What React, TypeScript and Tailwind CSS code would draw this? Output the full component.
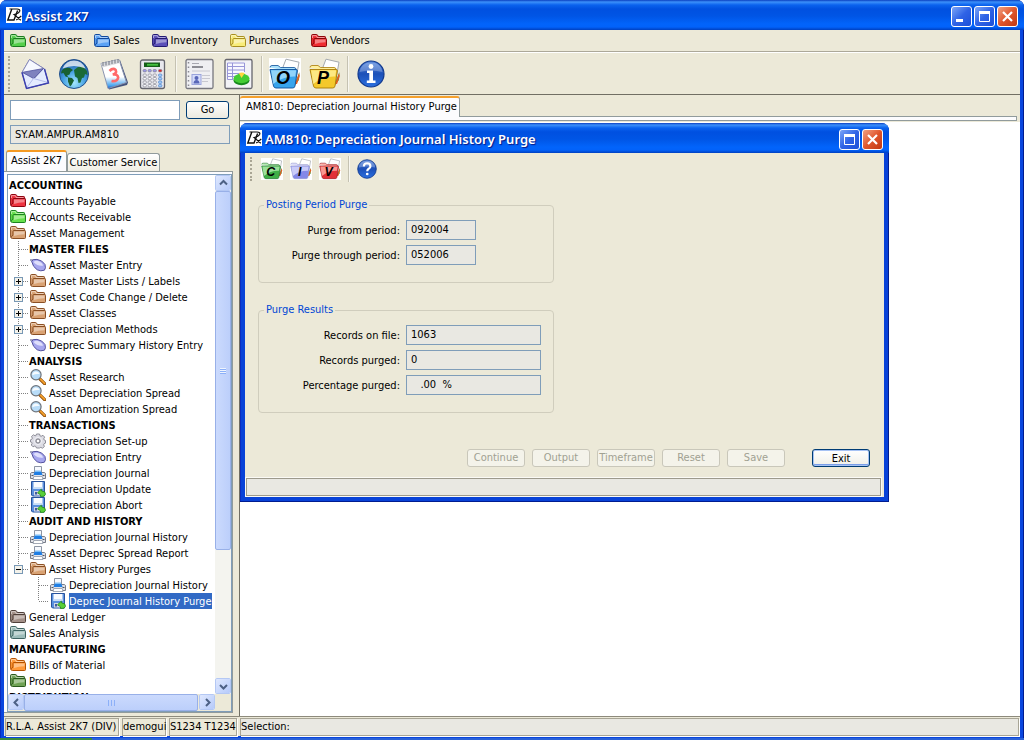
import React from "react";

type IconKind = "folder" | "pill" | "lens" | "gear" | "printer" | "disk";

interface TreeItem {
  label: string;
  depth: 0 | 1 | 2;
  icon?: IconKind;
  color?: string;
  dark?: string;
  toggle?: "plus" | "minus";
  last?: boolean;
  selected?: boolean;
}

const TAN = "#d9a273";
const TAN_DARK = "#8a4f24";

const TREE: TreeItem[] = [
  { label: "ACCOUNTING", depth: 0 },
  { label: "Accounts Payable", depth: 0, icon: "folder", color: "#ee3340", dark: "#8c0510" },
  { label: "Accounts Receivable", depth: 0, icon: "folder", color: "#66e04c", dark: "#1c8420" },
  { label: "Asset Management", depth: 0, icon: "folder", color: TAN, dark: TAN_DARK },
  { label: "MASTER FILES", depth: 1 },
  { label: "Asset Master Entry", depth: 1, icon: "pill" },
  { label: "Asset Master Lists / Labels", depth: 1, icon: "folder", color: TAN, dark: TAN_DARK, toggle: "plus" },
  { label: "Asset Code Change / Delete", depth: 1, icon: "folder", color: TAN, dark: TAN_DARK, toggle: "plus" },
  { label: "Asset Classes", depth: 1, icon: "folder", color: TAN, dark: TAN_DARK, toggle: "plus" },
  { label: "Depreciation Methods", depth: 1, icon: "folder", color: TAN, dark: TAN_DARK, toggle: "plus" },
  { label: "Deprec Summary History Entry", depth: 1, icon: "pill" },
  { label: "ANALYSIS", depth: 1 },
  { label: "Asset Research", depth: 1, icon: "lens" },
  { label: "Asset Depreciation Spread", depth: 1, icon: "lens" },
  { label: "Loan Amortization Spread", depth: 1, icon: "lens" },
  { label: "TRANSACTIONS", depth: 1 },
  { label: "Depreciation Set-up", depth: 1, icon: "gear" },
  { label: "Depreciation Entry", depth: 1, icon: "pill" },
  { label: "Depreciation Journal", depth: 1, icon: "printer" },
  { label: "Depreciation Update", depth: 1, icon: "disk" },
  { label: "Depreciation Abort", depth: 1, icon: "disk" },
  { label: "AUDIT AND HISTORY", depth: 1 },
  { label: "Depreciation Journal History", depth: 1, icon: "printer" },
  { label: "Asset Deprec Spread Report", depth: 1, icon: "printer" },
  { label: "Asset History Purges", depth: 1, icon: "folder", color: TAN, dark: TAN_DARK, toggle: "minus", last: true },
  { label: "Depreciation Journal History", depth: 2, icon: "printer" },
  { label: "Deprec Journal History Purge", depth: 2, icon: "disk", last: true, selected: true },
  { label: "General Ledger", depth: 0, icon: "folder", color: "#a39088", dark: "#4f403a" },
  { label: "Sales Analysis", depth: 0, icon: "folder", color: "#9dbdba", dark: "#3f6462" },
  { label: "MANUFACTURING", depth: 0 },
  { label: "Bills of Material", depth: 0, icon: "folder", color: "#ff9a3a", dark: "#b55200" },
  { label: "Production", depth: 0, icon: "folder", color: "#6fa254", dark: "#2a5a1c" },
  { label: "DISTRIBUTION", depth: 0 },
];

const MENUS = [
  { label: "Customers", color: "#55cf4b", dark: "#1b7a1f" },
  { label: "Sales", color: "#5ba2f5", dark: "#11489c" },
  { label: "Inventory", color: "#5b50b8", dark: "#231a72" },
  { label: "Purchases", color: "#f8ec78", dark: "#a88e20" },
  { label: "Vendors", color: "#ee2c30", dark: "#8a0508" },
];

function Folder({ color = TAN, dark = TAN_DARK }: { color?: string; dark?: string }) {
  return (
    <svg width="16" height="16" viewBox="0 0 16 16" className="shrink-0" aria-hidden="true">
      <path d="M.6 11.500V2.500q0-1 1-1h3.900q.8 0 1.200.9l.5 1.100h6.600q.7 0 .7.800v2" fill={color} stroke={dark} />
      <path d="M1.500 5V2.600h3.800l.9 1.900h7.300" fill="none" stroke="#fff" strokeOpacity=".5" />
      <path d="M4 5.500h10.700q.9 0 .8.900v6.200q0 .9-.9.900H2.600Q.6 13.500.6 11.500q1.900.2 2.300-1.500V6.500q0-1 1.100-1z" fill={color} stroke={dark} />
      <path d="M4 6.500h10.500v2.700Q8.500 9.500 4 11z" fill="#fff" fillOpacity=".4" />
    </svg>
  );
}

function Pill() {
  return (
    <svg width="16" height="16" viewBox="0 0 16 16" className="shrink-0" aria-hidden="true">
      <path d="M0 3h4" stroke="#8888a8" strokeWidth="1.500" />
      <path d="M1.600 4.200Q2.600 2 7 2.400Q12.500 3.200 15 7.500Q16.200 11.200 14.400 13.200Q10.800 14.600 7.200 12.800Q2.800 10 1.600 4.200z" fill="#a6a6ee" stroke="#5654a0" />
      <path d="M3.400 5Q6 3 9.500 4.400Q12.300 6 13.200 8.600Q8.300 9.800 3.400 5z" fill="#f0f0ff" fillOpacity=".75" />
    </svg>
  );
}

function Lens() {
  return (
    <svg width="16" height="16" viewBox="0 0 16 16" className="shrink-0" aria-hidden="true">
      <path d="M9.800 9.800l4.800 4.800" stroke="#8a4a06" strokeWidth="3.200" strokeLinecap="round" />
      <path d="M10.400 10.200l4.200 4.200" stroke="#f5a02c" strokeWidth="1.800" strokeLinecap="round" />
      <circle cx="6" cy="5.700" r="5.100" fill="#b8dcf8" stroke="#6e747c" strokeWidth="1.200" />
      <path d="M2.300 6.200a3.800 3.800 0 0 1 7.400-1.200q-3.600-.5-7.400 1.200z" fill="#fff" fillOpacity=".85" />
    </svg>
  );
}

function Gear() {
  return (
    <svg width="16" height="16" viewBox="0 0 16 16" className="shrink-0" aria-hidden="true">
      <path
        d="M6.500 1h3l.6 1.900 1 .4 1.900-1 1.600 1.800-.9 1.800.4 1 1.400.6v2.600l-1.500.7-.4 1 .8 1.700-1.900 1.700-1.700-.8-1.100.5L9.500 15h-3l-.7-1.500-1-.5-1.800.8-1.700-1.800.8-1.700-.4-1L.5 9V6.800l1.400-.6.5-1-.9-1.700 2-1.700 1.600 1 1-.4z"
        fill="#dcdce4"
        stroke="#8e8e98"
        strokeLinejoin="round"
      />
      <circle cx="8" cy="8" r="3.700" fill="#cfcfd8" stroke="#f6f6fa" strokeWidth=".8" />
      <circle cx="8" cy="8" r="2" fill="#fff" stroke="#777780" />
    </svg>
  );
}

function Printer() {
  return (
    <svg width="16" height="16" viewBox="0 0 16 16" className="shrink-0" aria-hidden="true">
      <path d="M1.500 7.500h13q1 .5 1 1.500v4.500H.5V9q0-1 1-1.500z" fill="#dfe1e8" stroke="#777c88" />
      <path d="M4.500 8.500v-7h7v7" fill="#f6f9fe" stroke="#8d95a4" />
      <path d="M5 5.500h6v2H5z" fill="#7abcf6" />
      <path d="M4.500 7h7l1 3h-9z" fill="#1f7ee4" />
      <path d="M3 14.500l.8-3h8.400l.8 3z" fill="#fff" stroke="#8d95a4" strokeWidth=".8" />
      <path d="M1.500 10.500h2M12.500 10.500h2" stroke="#50545e" />
    </svg>
  );
}

function Disk() {
  return (
    <svg width="16" height="16" viewBox="0 0 16 16" className="shrink-0" aria-hidden="true">
      <path d="M1.500 .5h13v14.500h-12l-1-1z" fill="#5a90de" stroke="#27529c" />
      <path d="M3.500 1h9v7h-9z" fill="#f8fbff" />
      <path d="M3.500 6h9v2h-9z" fill="#c8def8" />
      <path d="M4 10h7.500v4.500H4z" fill="#d4d8e4" />
      <path d="M5 11h2v2.500H5z" fill="#3d5aa0" />
      <path d="M7.500 11.800l3.800-3.600.4 1.800q3.800 0 3.800 3.300-.5 2.700-5 2.200v-1.700z" fill="#58d038" stroke="#24851a" strokeWidth=".8" />
    </svg>
  );
}

function TreeIcon({ item }: { item: TreeItem }) {
  switch (item.icon) {
    case "folder":
      return <Folder color={item.color} dark={item.dark} />;
    case "pill":
      return <Pill />;
    case "lens":
      return <Lens />;
    case "gear":
      return <Gear />;
    case "printer":
      return <Printer />;
    default:
      return <Disk />;
  }
}

function Guide({ item }: { item: TreeItem }) {
  return (
    <svg width="20" height="16" viewBox="0 0 20 16" className="shrink-0" aria-hidden="true" shapeRendering="crispEdges">
      <path d={item.last ? "M9.500 0v8" : "M9.500 0v16"} stroke="#808080" strokeDasharray="1 1" fill="none" />
      <path d="M10 8.500h10" stroke="#808080" strokeDasharray="1 1" fill="none" />
      {item.toggle && (
        <g>
          <rect x="5.500" y="4.500" width="8" height="8" fill="#f4f2ea" stroke="#7898b5" />
          <path d={item.toggle === "plus" ? "M7 8.500h5M9.500 6v5" : "M7 8.500h5"} stroke="#000" fill="none" />
        </g>
      )}
    </svg>
  );
}

function TreeRow({ item }: { item: TreeItem }) {
  return (
    <li
      role="treeitem"
      aria-level={item.depth + 1}
      aria-selected={item.selected ? true : false}
      className="flex h-4 items-start whitespace-nowrap"
    >
      {item.depth === 2 && <span className="w-5 shrink-0" />}
      {item.depth > 0 && <Guide item={item} />}
      {item.icon && (
        <span className="flex w-5 shrink-0 pl-px">
          <TreeIcon item={item} />
        </span>
      )}
      <span
        className={
          item.selected
            ? "h-4 bg-[#316ac5] pr-px leading-[18px] text-white"
            : item.icon
              ? "leading-[18px]"
              : "leading-[18px] font-bold"
        }
      >
        {item.label}
      </span>
    </li>
  );
}

function Logo() {
  return (
    <svg width="16" height="16" viewBox="0 0 16 16" className="shrink-0" aria-hidden="true">
      <rect width="16" height="16" fill="#fff" />
      <path d="M5.800 2L1.800 13H8L11.600 3.500" fill="none" stroke="#111" strokeWidth="1.400" />
      <path d="M3.500 2h7.500q3.500.2 2.700 2.300Q12.500 6.800 8 7.500l6.800 5.800M15.300 9l-5 4" fill="none" stroke="#111" strokeWidth="1.200" />
    </svg>
  );
}

function CaptionButton({ kind }: { kind: "min" | "max" | "close" }) {
  return (
    <button
      type="button"
      aria-label={kind === "min" ? "Minimize" : kind === "max" ? "Maximize" : "Close"}
      className={
        kind === "close"
          ? "flex size-[21px] items-center justify-center rounded-[3px] border border-white bg-linear-to-br from-[#f0a080] via-[#e0562c] to-[#c03810]"
          : "flex size-[21px] items-center justify-center rounded-[3px] border border-white bg-linear-to-br from-[#7da4f6] via-[#2f63e6] to-[#1c4fd8]"
      }
    >
      <svg width="19" height="19" viewBox="0 0 19 19" aria-hidden="true">
        {kind === "min" && <path d="M4 12h7v3H4z" fill="#fff" />}
        {kind === "max" && (
          <g>
            <path d="M4.500 5.500h10v9h-10z" fill="none" stroke="#fff" />
            <path d="M4 4h11v3H4z" fill="#fff" />
          </g>
        )}
        {kind === "close" && <path d="M5 5l9 9M14 5l-9 9" stroke="#fff" strokeWidth="2.200" />}
      </svg>
    </button>
  );
}

function TitleBar({ title, controls }: { title: string; controls: ("min" | "max" | "close")[] }) {
  return (
    <header className="flex h-[30px] shrink-0 items-center gap-[3px] rounded-t-[7px] bg-[linear-gradient(to_bottom,#0a3fc0_0,#3c90fa_2px,#0a62ee_5px,#0050e0_9px,#0055e5_16px,#0264fb_24px,#0262fa_27px,#0040c0_30px)] pr-[6px] pl-[6px]">
      <Logo />
      <h1 className="grow pt-px font-['Noto_Sans','Open_Sans',sans-serif] text-[13px] font-semibold text-white [text-shadow:1px_1px_1px_#0a1883]">
        {title}
      </h1>
      <div className="flex gap-[2px] pt-[3px]">
        {controls.map((kind) => (
          <CaptionButton key={kind} kind={kind} />
        ))}
      </div>
    </header>
  );
}

function Divider() {
  return <span className="h-9 w-[2px] shrink-0 border-r border-l border-l-[#c5c2b2] border-r-[#f8f7f0]" />;
}

function Mail() {
  return (
    <svg width="32" height="32" viewBox="0 0 32 32" aria-hidden="true">
      <path d="M3 14.500L10.500 1.500 25.500 11l4 14L7.500 30.500z" fill="#e4ebff" stroke="#6365a4" />
      <path d="M3 14.500L10.500 1.500 24.500 10.500 16 20z" fill="#f6f8ff" stroke="#8486b8" strokeWidth=".8" />
      <path d="M3.500 14.300L24.500 10.500 14.500 20.500z" fill="#7f82be" stroke="#5254a0" strokeWidth=".8" />
      <path d="M7.500 30l7-9.500L29 24.500" stroke="#b4bcec" fill="none" />
      <path d="M3 14.500L7.500 30.500 29.500 25 25.500 11" stroke="#3c40b0" strokeWidth="1.400" fill="none" />
    </svg>
  );
}

function Globe() {
  return (
    <svg width="32" height="32" viewBox="0 0 32 32" aria-hidden="true">
      <defs>
        <radialGradient id="sea" cx=".5" cy=".8" r=".8">
          <stop offset="0" stopColor="#a4e8ff" />
          <stop offset=".45" stopColor="#4aa4e4" />
          <stop offset="1" stopColor="#114a98" />
        </radialGradient>
      </defs>
      <circle cx="16" cy="16" r="14.500" fill="url(#sea)" stroke="#23518c" />
      <path d="M3.500 13q3-4 8.500-3l3 2-2.500 2-1 2.500-2.500 1 1.500 2-3-1-2-3.500-2.500.5zM10 19.500l4 .5 2 2.500-2.500 4.500-1.500 1.500-2-5z" fill="#186032" />
      <path d="M16 12l4-3 5-.5 4 4.500.5 4-2.500-1-1 3.500-2 .5-1.500 4.500-2 .5-1-5-2.500-1.500z" fill="#1a6a36" />
      <path d="M4.500 10.500Q8 2.500 16 2.500T27.500 10.500Q16 5.500 4.500 10.500z" fill="#fff" fillOpacity=".75" />
    </svg>
  );
}

function CalendarIcon() {
  return (
    <svg width="32" height="32" viewBox="0 0 32 32" aria-hidden="true">
      <defs>
        <linearGradient id="page" x1="0" y1="0" x2="0" y2="1">
          <stop offset=".6" stopColor="#fff" />
          <stop offset=".9" stopColor="#4aa4ee" />
          <stop offset="1" stopColor="#1455c4" />
        </linearGradient>
      </defs>
      <path d="M4 6L22 2l8 22.500-1 2.500L11 31.500z" fill="#44537c" />
      <path d="M3 5.500L21 1.500 28.500 24.500 10 30.500z" fill="url(#page)" stroke="#8a94b0" />
      <path d="M3 5.500L21 1.500l1 3.500L4.200 9.500z" fill="#d8dade" />
      <path d="M5 4v4M8 3.500v4M11 3v4M14 2v4M17 1.500v4M20 1v4" stroke="#6a6e78" strokeWidth=".9" />
      <path d="M11.500 13q3.500-3.500 6.200-1 1.600 3.400-3 4.500 5-.8 5.500 3-1 4.500-6.700 3.500" fill="none" stroke="#ff6a6a" strokeWidth="2.600" />
    </svg>
  );
}

function CalculatorIcon() {
  return (
    <svg width="32" height="32" viewBox="0 0 32 32" aria-hidden="true">
      <rect x="3.500" y="2" width="24" height="28.500" rx="2" fill="#e8e8ee" stroke="#66666e" strokeWidth="1.300" />
      <rect x="7" y="4.500" width="16" height="4.500" fill="#155e18" />
      <path d="M10 6.800h11" stroke="#45c040" strokeWidth="1.800" />
      {[11.500, 16, 19.500, 23, 26.500].map((y, r) =>
        [6, 11, 16, 21.500].map((x, c) => (
          <rect
            key={`${x}-${y}`}
            x={x}
            y={y}
            width="3.400"
            height="2.400"
            rx="1"
            fill={r === 0 ? (c === 3 ? "#e02828" : "#9a98e8") : c === 3 ? "#a4ccfa" : "#f8f8fc"}
            stroke={c === 3 && r > 0 ? "#4c84c8" : "#85858f"}
            strokeWidth=".7"
          />
        )),
      )}
    </svg>
  );
}

function ReportIcon() {
  return (
    <svg width="32" height="32" viewBox="0 0 32 32" aria-hidden="true">
      <rect x="3" y="1.500" width="27" height="29" rx="1.500" fill="#efeff2" stroke="#77777f" strokeWidth="1.300" />
      <path d="M5.500 4v24" stroke="#8b8b93" strokeWidth="1.500" strokeDasharray="1.500 3" />
      <path d="M9 5.500h7" stroke="#a8a8b0" />
      <path d="M9 9h11" stroke="#75757c" strokeWidth="1.600" />
      <path d="M9 13h18M19 17.500h8M19 20.500h8M19 23.500h6" stroke="#c8c8d0" />
      <rect x="9" y="16.500" width="9" height="10" fill="#d5dcfa" stroke="#9aa4dc" />
      <circle cx="13.500" cy="20" r="2" fill="#5967b8" />
      <path d="M10.500 25.500q0-3.500 3-3.500t3 3.500z" fill="#5967b8" />
    </svg>
  );
}

function ChartIcon() {
  return (
    <svg width="32" height="32" viewBox="0 0 32 32" aria-hidden="true">
      <rect x="3" y="1.500" width="27" height="29" rx="1.500" fill="#f2f2f6" stroke="#66666e" strokeWidth="1.300" />
      <rect x="5.500" y="4.500" width="17" height="17" fill="#f8f8ff" />
      <path d="M5.500 5h17M5.500 8.500h17M5.500 12h17M5.500 15.500h14M5.500 18.500h8M5.500 21.500h6M5.500 5v16.500M10.500 5v16.500M22.500 5v9" stroke="#9896d8" fill="none" />
      <ellipse cx="19.500" cy="22.500" rx="8" ry="4.700" fill="#178a1c" />
      <ellipse cx="19.500" cy="20.500" rx="8" ry="4.700" fill="#44cc34" />
      <path d="M19.500 20l-2.700-5q3-1 6 0z" fill="#ffd740" />
    </svg>
  );
}

interface LetterFolderProps {
  letter: string;
  light: string;
  main: string;
  deep: string;
  size: number;
  backdrop?: boolean;
}

function LetterFolder({ letter, light, main, deep, size, backdrop }: LetterFolderProps) {
  return (
    <svg width={size} height={size} viewBox="0 0 32 32" aria-hidden="true">
      {backdrop && <rect width="32" height="32" fill="#fff" />}
      <path d="M14 9L17 1.200l13 3-4 22z" fill="#fff" stroke="#a4aab0" />
      <path d="M25 27l5.500-13-.5 8-4 5z" fill="#40b050" />
      <path d="M26 26l4-11 .8 3-2.800 8z" fill="#e65a20" />
      <path d="M1 9.500q0-2 2-2h6l2.500 2H25q2 0 2 2l-1 3" fill={light} stroke={deep} strokeWidth=".8" />
      <path d="M1 11.500h26q1.500 0 1.300 1.500L26 28q-.3 2-2.300 2H7q-2 0-2.500-2z" fill={main} stroke={deep} strokeWidth=".9" />
      <path d="M2 12.300h25.200l-1 6.200Q14 18 4.200 26z" fill={light} fillOpacity=".8" />
      <text x="14" y="25.500" textAnchor="middle" fontFamily="Liberation Sans, sans-serif" fontSize="18" fontWeight="bold" fontStyle="italic" fill="#000">
        {letter}
      </text>
    </svg>
  );
}

function RoundMark({ size, help }: { size: number; help?: boolean }) {
  return (
    <svg width={size} height={size} viewBox="0 0 28 28" aria-hidden="true">
      <defs>
        <linearGradient id="mark" x1="0" y1="0" x2="0" y2="1">
          <stop offset="0" stopColor="#5586dc" />
          <stop offset=".5" stopColor="#1c50b8" />
          <stop offset="1" stopColor="#2b70e0" />
        </linearGradient>
      </defs>
      <circle cx="14" cy="14" r="13" fill="url(#mark)" stroke="#123a8e" strokeWidth="1.200" />
      <path d="M2.500 12Q4 2.500 14 2.500T25.500 12Q14 9 2.500 12z" fill="#fff" fillOpacity=".25" />
      {help ? (
        <g>
          <path d="M9.500 10.500q.3-4.500 4.700-4.500 4.600.2 4.600 4 0 2.300-2.500 3.700-2 1.200-2 3.300" fill="none" stroke="#fff" strokeWidth="3" />
          <circle cx="14.300" cy="21" r="1.900" fill="#fff" />
        </g>
      ) : (
        <g fill="#fff">
          <circle cx="14" cy="6.500" r="2.400" />
          <path d="M10 10.500H16v10h2.500V23h-8.700v-2.500h2.500v-7.500H10z" />
        </g>
      )}
    </svg>
  );
}

function ToolButton({ label, className, children }: { label: string; className: string; children: React.ReactNode }) {
  return (
    <button type="button" aria-label={label} className={className}>
      {children}
    </button>
  );
}

function Arrow({ d }: { d: string }) {
  return (
    <svg width="9" height="9" viewBox="0 0 9 9" aria-hidden="true">
      <path d={d} fill="none" stroke="#4d6185" strokeWidth="2" />
    </svg>
  );
}

const SCROLL_BUTTON =
  "flex size-4 shrink-0 items-center justify-center rounded-[2px] border border-white bg-linear-to-br from-[#dfe8fe] to-[#b6cafa] outline outline-[#b4c8f4] -outline-offset-1";

function Sidebar() {
  return (
    <aside className="flex w-[231px] shrink-0 flex-col">
      <form className="flex gap-[6px] pt-[5px] pl-[6px]" onSubmit={(e) => e.preventDefault()}>
        <input aria-label="Program" type="text" className="h-5 w-[170px] border border-[#7f9db9] bg-white px-1" />
        <button
          type="submit"
          className="mt-px h-[18px] w-[43px] rounded-[3px] border border-[#003c74] bg-linear-to-b from-white to-[#eceae0] leading-4"
        >
          Go
        </button>
      </form>
      <input
        aria-label="Program path"
        readOnly
        value="SY.AM.AMPUR.AM810"
        className="mt-[5px] mr-[5px] ml-[6px] h-[19px] border border-[#7f9db9] bg-[#e9e8e2] px-1"
      />
      <div role="tablist" className="mt-[6px] flex h-[21px] items-end pl-[2px]">
        <button
          type="button"
          role="tab"
          aria-selected="true"
          className="h-[21px] w-[61px] rounded-t-[3px] border-x border-t-2 border-x-[#919b9c] border-t-[#f59a22] bg-[#fcfcfe] leading-[18px] whitespace-nowrap"
        >
          Assist 2K7
        </button>
        <button
          type="button"
          role="tab"
          aria-selected="false"
          className="h-[18px] w-[93px] rounded-t-[3px] border border-b-0 border-[#919b9c] bg-linear-to-b from-white to-[#f0eee4] leading-[18px] whitespace-nowrap"
        >
          Customer Service
        </button>
      </div>
      <div className="mr-[2px] flex min-h-0 grow flex-col border-t border-r border-[#919b9c] bg-[#fcfcfe] pt-[2px] pl-[3px]">
        <div className="flex min-h-0 grow flex-col border border-[#7f9db9] bg-white">
          <div className="flex min-h-0 grow">
            <ul role="tree" aria-label="Programs" className="min-w-0 grow overflow-hidden pt-[2px] pl-px">
              {TREE.map((item, index) => (
                <TreeRow key={index} item={item} />
              ))}
            </ul>
            <div className="flex w-4 shrink-0 flex-col bg-[#f4f4ef]">
              <button type="button" aria-label="Scroll up" className={SCROLL_BUTTON}>
                <Arrow d="M1 6.500L4.500 3 8 6.500" />
              </button>
              <div className="flex grow-[356] flex-col items-center justify-center gap-px rounded-[2px] border border-[#98b0e8] bg-linear-to-r from-[#cbdafd] to-[#bccffb]">
                <span className="h-px w-[6px] bg-[#eef4fe] shadow-[0_1px_0_#8cb0f8]" />
                <span className="h-px w-[6px] bg-[#eef4fe] shadow-[0_1px_0_#8cb0f8]" />
                <span className="h-px w-[6px] bg-[#eef4fe] shadow-[0_1px_0_#8cb0f8]" />
              </div>
              <div className="grow-[130]" />
              <button type="button" aria-label="Scroll down" className={SCROLL_BUTTON}>
                <Arrow d="M1 3L4.500 6.500 8 3" />
              </button>
            </div>
          </div>
          <div className="flex h-[17px] shrink-0 bg-[#ece9d8] pr-4">
            <button type="button" aria-label="Scroll left" className={SCROLL_BUTTON}>
              <Arrow d="M6 1L2.500 4.500 6 8" />
            </button>
            <div className="mr-px flex grow items-center justify-center gap-[2px] rounded-[2px] border border-[#98b0e8] bg-linear-to-b from-[#cbdafd] to-[#bccffb]">
              <span className="h-[6px] w-px bg-[#8cb0f8]" />
              <span className="h-[6px] w-px bg-[#8cb0f8]" />
              <span className="h-[6px] w-px bg-[#8cb0f8]" />
            </div>
            <button type="button" aria-label="Scroll right" className={SCROLL_BUTTON}>
              <Arrow d="M3 1l3.500 3.500L3 8" />
            </button>
          </div>
        </div>
      </div>
      <div className="mr-[2px] h-1 shrink-0 border-t border-[#919b9c]" />
    </aside>
  );
}

function Field({ id, label, value, width }: { id: string; label: string; value: string; width: string }) {
  return (
    <div className="mb-[5px] flex h-5 items-center gap-[6px]">
      <label htmlFor={id} className="w-[141px] pt-px text-right">
        {label}
      </label>
      <input id={id} readOnly value={value} className={`h-5 border border-[#7f9db9] bg-[#e9e8e2] px-1 pb-[2px] ${width}`} />
    </div>
  );
}

function PurgeWindow() {
  return (
    <section className="flex h-[379px] w-[649px] max-w-full flex-col rounded-t-[8px] bg-[#0842d8] shadow-[inset_-1px_-1px_0_#001c90,inset_1px_0_0_#0a2cc0]">
      <TitleBar title="AM810: Depreciation Journal History Purge" controls={["max", "close"]} />
      <div className="mx-[5px] mb-[5px] flex grow flex-col bg-[#ece9d8]">
        <div className="flex h-8 items-center pl-[5px]">
          <span className="h-6 shrink-0 border-l-2 border-dotted border-[#a9a594]" />
          <ToolButton label="Customers" className="ml-[9px]">
            <LetterFolder letter="C" light="#b4ecb0" main="#3fae48" deep="#1d6e2a" size={22} backdrop />
          </ToolButton>
          <ToolButton label="Inventory" className="ml-[7px]">
            <LetterFolder letter="I" light="#dcdcfc" main="#8488e8" deep="#9498cc" size={22} backdrop />
          </ToolButton>
          <ToolButton label="Vendors" className="ml-[7px]">
            <LetterFolder letter="V" light="#ffb0a8" main="#e23038" deep="#981018" size={22} backdrop />
          </ToolButton>
          <span className="ml-[7px] h-[26px] w-[2px] border-r border-l border-l-[#c5c2b2] border-r-[#f8f7f0]" />
          <ToolButton label="Help" className="ml-[7px]">
            <RoundMark size={20} help />
          </ToolButton>
        </div>
        <fieldset className="mt-3 ml-[13px] h-[86px] w-[296px] rounded-[4px] border border-[#d0cdbd]">
          <legend className="ml-[5px] px-[2px] leading-4 text-[#0046d5]">Posting Period Purge</legend>
          <div className="pt-[7px]">
            <Field id="from" label="Purge from period:" value="092004" width="w-[70px]" />
            <Field id="through" label="Purge through period:" value="052006" width="w-[70px]" />
          </div>
        </fieldset>
        <fieldset className="mt-[19px] ml-[13px] h-[111px] w-[296px] rounded-[4px] border border-[#d0cdbd]">
          <legend className="ml-[5px] px-[2px] leading-4 text-[#0046d5]">Purge Results</legend>
          <div className="pt-[7px]">
            <Field id="onfile" label="Records on file:" value="1063" width="w-[135px]" />
            <Field id="purged" label="Records purged:" value="0" width="w-[135px]" />
            <Field id="percent" label="Percentage purged:" value={"\u00a0\u00a0\u00a0.00\u00a0\u00a0%"} width="w-[135px]" />
          </div>
        </fieldset>
        <div className="mt-auto mb-[11px] flex justify-end gap-[7px] pr-[14px]">
          {["Continue", "Output", "Timeframe", "Reset", "Save"].map((name) => (
            <button
              key={name}
              type="button"
              disabled
              className="flex h-[18px] w-[58px] items-center justify-center rounded-[3px] border border-[#c9c7ba] bg-[#f4f3ea] whitespace-nowrap text-[#a1a192]"
            >
              {name}
            </button>
          ))}
          <button
            type="button"
            className="ml-5 h-[18px] w-[58px] rounded-[3px] border border-[#003c74] bg-linear-to-b from-white to-[#f0efe8] leading-[18px] shadow-[inset_0_0_0_1px_#a6c2f4,inset_0_-2px_0_#7a9ee8]"
          >
            Exit
          </button>
        </div>
        <div className="mr-[3px] mb-px ml-px h-[18px] border border-[#9d9a8c] bg-[#e9e8e2] shadow-[0_0_0_1px_#fbfaf5]" />
      </div>
    </section>
  );
}

const STATUS_CELL =
  "flex h-[18px] items-center border border-[#a8a596] whitespace-nowrap shadow-[1px_1px_0_#fff]";

export default function App() {
  return (
    <div className="flex h-screen flex-col overflow-hidden bg-white font-['DejaVu_Sans_Condensed','DejaVu_Sans',sans-serif] text-[11px] leading-[14px] text-black">
      <div className="flex min-h-0 grow flex-col rounded-t-[7px] bg-[#0a46de] shadow-[inset_1px_0_0_#0a2cc0,inset_-1px_0_0_#001c90]">
        <TitleBar title="Assist 2K7" controls={["min", "max", "close"]} />
        <div className="mx-1 mb-[2px] flex min-h-0 grow flex-col bg-[#ece9d8]">
          <nav className="flex h-[22px] shrink-0 items-center gap-3 border-b border-[#aca899] pl-[6px]">
            {MENUS.map((menu) => (
              <button key={menu.label} type="button" className="flex items-center gap-[3px]">
                <Folder color={menu.color} dark={menu.dark} />
                {menu.label}
              </button>
            ))}
          </nav>
          <div className="flex h-[43px] shrink-0 items-center border-t border-b border-t-white border-b-[#716f64] pl-1">
            <span className="h-9 w-0 shrink-0 border-l-2 border-dotted border-[#a9a594]" />
            <ToolButton label="Mail" className="ml-[9px]"><Mail /></ToolButton>
            <ToolButton label="Web" className="ml-[7px]"><Globe /></ToolButton>
            <ToolButton label="Calendar" className="ml-2"><CalendarIcon /></ToolButton>
            <ToolButton label="Calculator" className="ml-[7px]"><CalculatorIcon /></ToolButton>
            <span className="ml-[6px] flex"><Divider /></span>
            <ToolButton label="Report" className="ml-[6px]"><ReportIcon /></ToolButton>
            <ToolButton label="Charts" className="ml-[7px]"><ChartIcon /></ToolButton>
            <span className="ml-[7px] flex"><Divider /></span>
            <ToolButton label="Orders" className="ml-[6px]">
              <LetterFolder letter="O" light="#a8e0fc" main="#38a4ec" deep="#0d4f98" size={32} backdrop />
            </ToolButton>
            <ToolButton label="Purchasing" className="ml-2">
              <LetterFolder letter="P" light="#fff09a" main="#f4c82c" deep="#a87a08" size={32} />
            </ToolButton>
            <span className="ml-[6px] flex"><Divider /></span>
            <ToolButton label="Information" className="ml-2"><RoundMark size={28} /></ToolButton>
          </div>
          <div className="flex min-h-0 grow">
            <Sidebar />
            <main className="ml-1 flex min-w-0 grow flex-col border-l border-[#716f64] bg-white">
              <div className="flex h-[27px] shrink-0 flex-col bg-[#ece9d8] pr-[3px]">
                <div role="tablist" className="flex h-[22px] items-end pt-px">
                  <button
                    type="button"
                    role="tab"
                    aria-selected="true"
                    className="h-[21px] w-[220px] rounded-t-[3px] border-r border-t-2 border-r-[#919b9c] border-t-[#f5a02c] bg-[#fcfcfe] pb-px pl-[6px] text-left leading-4 whitespace-nowrap"
                  >
                    AM810: Depreciation Journal History Purge
                  </button>
                  <span className="grow border-b border-[#919b9c]" />
                </div>
                <div className="h-1 border-r border-b border-[#919b9c] bg-[#fcfcfe]" />
              </div>
              <div className="min-h-0 grow overflow-hidden pt-px">
                <PurgeWindow />
              </div>
            </main>
          </div>
          <footer className="flex h-5 shrink-0 items-center gap-[3px] border-t border-[#8d8a7c] pr-px pl-px">
            <span className={`${STATUS_CELL} w-[114px] shrink-0`}>R.L.A. Assist 2K7 (DIV)</span>
            <span className={`${STATUS_CELL} w-[44px] shrink-0`}>demogui</span>
            <span className={`${STATUS_CELL} w-[68px] shrink-0`}>S1234 T1234</span>
            <span className={`${STATUS_CELL} grow bg-[#e9e8e2]`}>Selection:</span>
          </footer>
        </div>
      </div>
      <div className="h-[2px] shrink-0 bg-linear-to-r from-[#3c8c3c] from-9% to-[#2a62d8] to-9%" />
    </div>
  );
}
